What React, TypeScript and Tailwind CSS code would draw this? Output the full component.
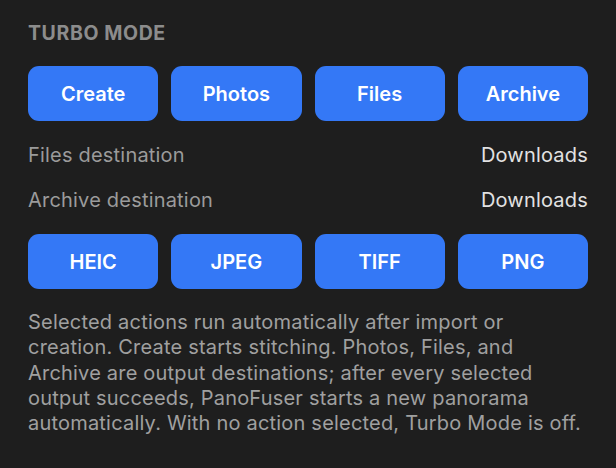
import React from 'react';

const actions = ['Create', 'Photos', 'Files', 'Archive'];
const formats = ['HEIC', 'JPEG', 'TIFF', 'PNG'];

const destinations = [
  { label: 'Files destination', value: 'Downloads' },
  { label: 'Archive destination', value: 'Downloads' },
];

// lines of the help text, broken where the original wraps
const helpLines = [
  'Selected actions run automatically after import or',
  'creation. Create starts stitching. Photos, Files, and',
  'Archive are output destinations; after every selected',
  'output succeeds, PanoFuser starts a new panorama',
  'automatically. With no action selected, Turbo Mode is off.',
];

const ButtonRow: React.FC<{ items: string[]; className?: string }> = ({ items, className }) => (
  <div className={`grid grid-cols-4 gap-[13px] ${className ?? ''}`}>
    {items.map((item) => (
      <button
        key={item}
        className="h-[55px] rounded-[11px] bg-[#3478f6] text-[20px] font-semibold text-white"
      >
        {item}
      </button>
    ))}
  </div>
);

const App: React.FC = () => {
  return (
    <div
      className="min-h-screen w-[616px] bg-[#1e1e1e] px-[28px] pt-[21px]"
      style={{ fontFamily: 'Inter, "Noto Sans", sans-serif' }}
    >
      <h2 className="h-[24px] text-[19.5px] leading-[24px] font-bold tracking-[0.6px] text-[#8c8c8c]">
        TURBO MODE
      </h2>

      <ButtonRow items={actions} className="mt-[21px]" />

      <div className="mt-[11px]">
        {destinations.map((d) => (
          <div key={d.label} className="flex h-[45px] items-center justify-between text-[20px] tracking-[0.2px]">
            <span className="text-[#9b9b9b]">{d.label}</span>
            <span className="text-[#e2e2e2]">{d.value}</span>
          </div>
        ))}
      </div>

      <ButtonRow items={formats} className="mt-[12px]" />

      <p className="mt-[21px] w-[580px] text-[20px] leading-[25.3px] tracking-[0.2px] text-[#a0a0a0]">
        {helpLines.map((line, i) => (
          <React.Fragment key={i}>
            {line}
            {i < helpLines.length - 1 && <br />}
          </React.Fragment>
        ))}
      </p>
    </div>
  );
};

export default App;
